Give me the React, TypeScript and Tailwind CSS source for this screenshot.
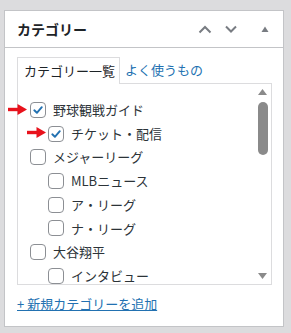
import React from 'react'

type Item = { label: string; depth: number; checked?: boolean }

const ITEMS: Item[] = [
  { label: '野球観戦ガイド', depth: 0, checked: true },
  { label: 'チケット・配信', depth: 1, checked: true },
  { label: 'メジャーリーグ', depth: 0 },
  { label: 'MLBニュース', depth: 1 },
  { label: 'ア・リーグ', depth: 1 },
  { label: 'ナ・リーグ', depth: 1 },
  { label: '大谷翔平', depth: 0 },
  { label: 'インタビュー', depth: 1 },
]

function Checkbox({ checked }: { checked?: boolean }) {
  return (
    <span className="flex size-4 shrink-0 items-center justify-center rounded-[4px] border border-[#8c8f94] bg-white">
      {checked && (
        <svg width="12" height="12" viewBox="0 0 12 12">
          <path d="M2.3 6.3 L4.9 8.8 L9.8 3.2" fill="none" stroke="#2271b1" strokeWidth="1.9" strokeLinecap="round" strokeLinejoin="round" />
        </svg>
      )}
    </span>
  )
}

function RedArrow() {
  return (
    <svg width="19" height="11" viewBox="0 0 19 11">
      <rect x="0" y="3.8" width="11" height="3.4" fill="#e8121c" />
      <path d="M9.5 0 L19 5.5 L9.5 11 Z" fill="#e8121c" />
    </svg>
  )
}

export default function App() {
  return (
    <div
      className="h-[333px] w-[291px] overflow-hidden bg-[#dcdcde] pl-[4px] pt-[10px]"
      style={{ fontFamily: '"Noto Sans CJK JP", "Noto Sans", sans-serif' }}
    >
      <div className="relative h-[317px] w-[280px] border border-[#c3c4c7] bg-white">
        <div className="flex h-[37px] items-center border-b border-[#c3c4c7] pl-[12px] pr-[14px]">
          <div className="flex-1 text-[14px] font-semibold text-[#1d2327]">カテゴリー</div>
          <div className="flex items-center">
            <svg width="14" height="9" viewBox="0 0 14 9" className="mr-[13px]">
              <path d="M1.5 7.5 L7 2 L12.5 7.5" fill="none" stroke="#787c82" strokeWidth="2" />
            </svg>
            <svg width="12" height="9" viewBox="0 0 12 9" className="mr-[24px]">
              <path d="M1 1.5 L6 6.5 L11 1.5" fill="none" stroke="#787c82" strokeWidth="2" />
            </svg>
            <svg width="8" height="6" viewBox="0 0 8 6">
              <path d="M0.5 6 L4 0.5 L7.5 6 Z" fill="#787c82" />
            </svg>
          </div>
        </div>

        <div className="pl-[12px] pt-[9px]">
          <div className="flex items-end">
            <div className="relative z-10 -mb-px flex h-[27px] w-[103px] items-center border border-b-0 border-[#dcdcde] bg-white pl-[6px] text-[13px] text-[#1d2327]">
              カテゴリー一覧
            </div>
            <div className="flex h-[26px] items-center pl-[5px] text-[13px] text-[#2271b1]">よく使うもの</div>
          </div>
          <div className="flex h-[202px] w-[255px] border border-[#dcdcde] bg-white">
            <ul className="flex-1 pl-[12px] pt-[14px] text-[13px] text-[#2c3338]">
              {ITEMS.map((it) => (
                <li
                  key={it.label}
                  className={`flex h-[23.7px] items-center gap-[7px] ${it.depth ? 'pl-[18px]' : ''}`}
                >
                  <Checkbox checked={it.checked} />
                  <span>{it.label}</span>
                </li>
              ))}
            </ul>
            <div className="flex w-[17px] flex-col items-center pt-[5px]">
              <svg width="9" height="6" viewBox="0 0 9 6">
                <path d="M0 6 L4.5 0 L9 6 Z" fill="#8a8a8a" />
              </svg>
              <div className="mt-[7px] h-[53px] w-[10px] rounded-full bg-[#8a8a8a]" />
              <div className="flex-1" />
              <svg width="9" height="6" viewBox="0 0 9 6" className="mb-[5px]">
                <path d="M0 0 L9 0 L4.5 6 Z" fill="#8a8a8a" />
              </svg>
            </div>
          </div>
          <a className="mt-[9px] block text-[13px] text-[#2271b1] underline">+ 新規カテゴリーを追加</a>
        </div>

        <div className="absolute left-[3px] top-[93px]">
          <RedArrow />
        </div>
        <div className="absolute left-[22px] top-[116px]">
          <RedArrow />
        </div>
      </div>
    </div>
  )
}
